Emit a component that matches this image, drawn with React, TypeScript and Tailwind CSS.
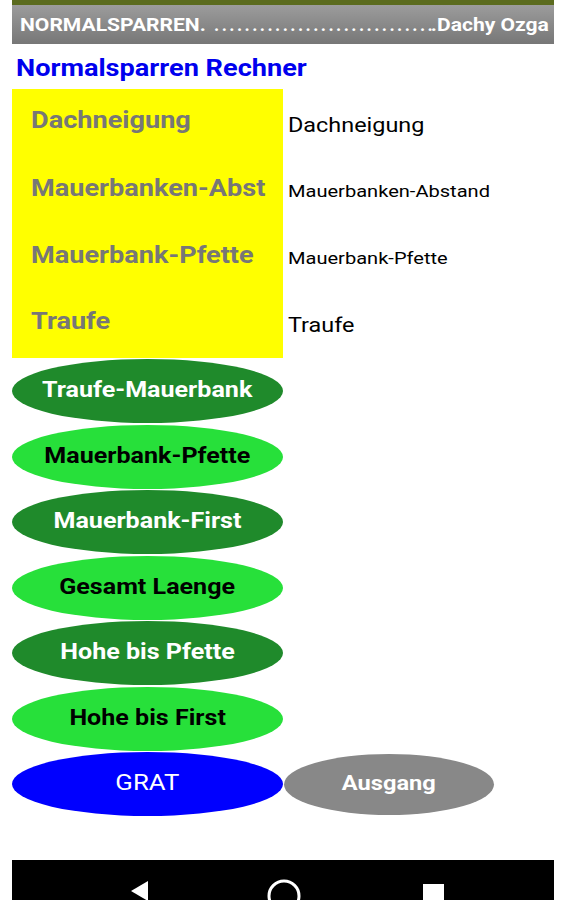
import React from "react";

const font = { fontFamily: "Roboto, 'Noto Sans', sans-serif" };

const buttons: { label: string; dark: boolean }[] = [
  { label: "Traufe-Mauerbank", dark: true },
  { label: "Mauerbank-Pfette", dark: false },
  { label: "Mauerbank-First", dark: true },
  { label: "Gesamt Laenge", dark: false },
  { label: "Hohe bis Pfette", dark: true },
  { label: "Hohe bis First", dark: false },
];

export default function App() {
  const dots = Array.from({ length: 29 });
  return (
    <div className="w-[566px] h-[900px] bg-white overflow-hidden flex flex-col px-[12px]" style={font}>
      <div className="h-[5px] bg-[#5b6b1e]" />
      <div className="h-[39px] bg-gradient-to-b from-[#9c9c9c] to-[#777777] flex items-center pl-[8px] pr-[5px] text-white font-bold text-[18px] leading-none">
        <span className="w-[190px] whitespace-nowrap">
          <span className="inline-block scale-x-[1.17] origin-left">NORMALSPARREN.</span>
        </span>
        <span className="flex-1 flex justify-between pl-[4px] pr-[2px]">
          {dots.map((_, i) => (
            <span key={i}>.</span>
          ))}
        </span>
        <span className="w-[114px] whitespace-nowrap text-right">
          <span className="inline-block scale-x-[1.17] origin-right">.Dachy Ozga</span>
        </span>
      </div>
      <div className="h-[45px] flex items-center pl-[4px] text-[#0000ee] font-bold text-[23px] pt-[5px]">
        <span className="inline-block scale-x-[1.18] origin-left">Normalsparren Rechner</span>
      </div>
      <div className="flex">
        <div className="w-[271px] h-[269px] bg-[#ffff00] flex flex-col pl-[19px] text-[#777777] font-bold text-[24px]">
          {["Dachneigung", "Mauerbanken-Abst", "Mauerbank-Pfette", "Traufe"].map((t, i) => (
            <div key={t} className={"flex items-center " + (i === 3 ? "h-[68px] pb-[6px]" : i === 0 ? "h-[67px] pb-[5px]" : "h-[67px] pb-[3px]")}>
              <span className="inline-block scale-x-[1.13] origin-left whitespace-nowrap">{t}</span>
            </div>
          ))}
        </div>
        <div className="flex flex-col pl-[5px] text-black">
          <div className="h-[67px] flex items-center pt-[5px] text-[20px]">
            <span className="inline-block scale-x-[1.17] origin-left">Dachneigung</span>
          </div>
          <div className="h-[67px] flex items-center pt-[4px] text-[17px]">
            <span className="inline-block scale-x-[1.18] origin-left">Mauerbanken-Abstand</span>
          </div>
          <div className="h-[67px] flex items-center pt-[4px] text-[17px]">
            <span className="inline-block scale-x-[1.18] origin-left">Mauerbank-Pfette</span>
          </div>
          <div className="h-[68px] flex items-center pt-[2px] text-[20px]">
            <span className="inline-block scale-x-[1.17] origin-left">Traufe</span>
          </div>
        </div>
      </div>
      <div className="flex flex-col gap-[1.5px] pt-[1px]">
        {buttons.map((b) => (
          <div
            key={b.label}
            className={
              "w-[271px] h-[64px] rounded-[50%] flex items-center justify-center font-bold text-[22px] " +
              (b.dark ? "bg-[#1f8a2b] text-white" : "bg-[#27e03a] text-black")
            }
          >
            <span className="inline-block scale-x-[1.14] pb-[3px] whitespace-nowrap">{b.label}</span>
          </div>
        ))}
        <div className="flex items-center">
          <div className="w-[271px] h-[64px] rounded-[50%] bg-[#0000ff] text-white text-[22px] flex items-center justify-center">
            <span className="inline-block scale-x-[1.17] pb-[4px]">GRAT</span>
          </div>
          <div className="ml-[1px] w-[210px] h-[61px] rounded-[50%] bg-[#888888] text-white font-bold text-[20px] flex items-center justify-center">
            <span className="inline-block scale-x-[1.18] pb-[3px]">Ausgang</span>
          </div>
        </div>
      </div>
      <div className="flex-1" />
      <div className="h-[40px] bg-black relative">
        <svg className="absolute left-[116px] top-[20px]" width="22" height="22" viewBox="0 0 22 22">
          <path d="M20 1 L20 21 L3 11 Z" fill="white" />
        </svg>
        <svg className="absolute left-[254px] top-[18px]" width="36" height="36" viewBox="0 0 36 36">
          <circle cx="18" cy="18" r="15" fill="none" stroke="white" strokeWidth="3" />
        </svg>
        <div className="absolute left-[411px] top-[24px] w-[21px] h-[21px] bg-white" />
      </div>
    </div>
  );
}
